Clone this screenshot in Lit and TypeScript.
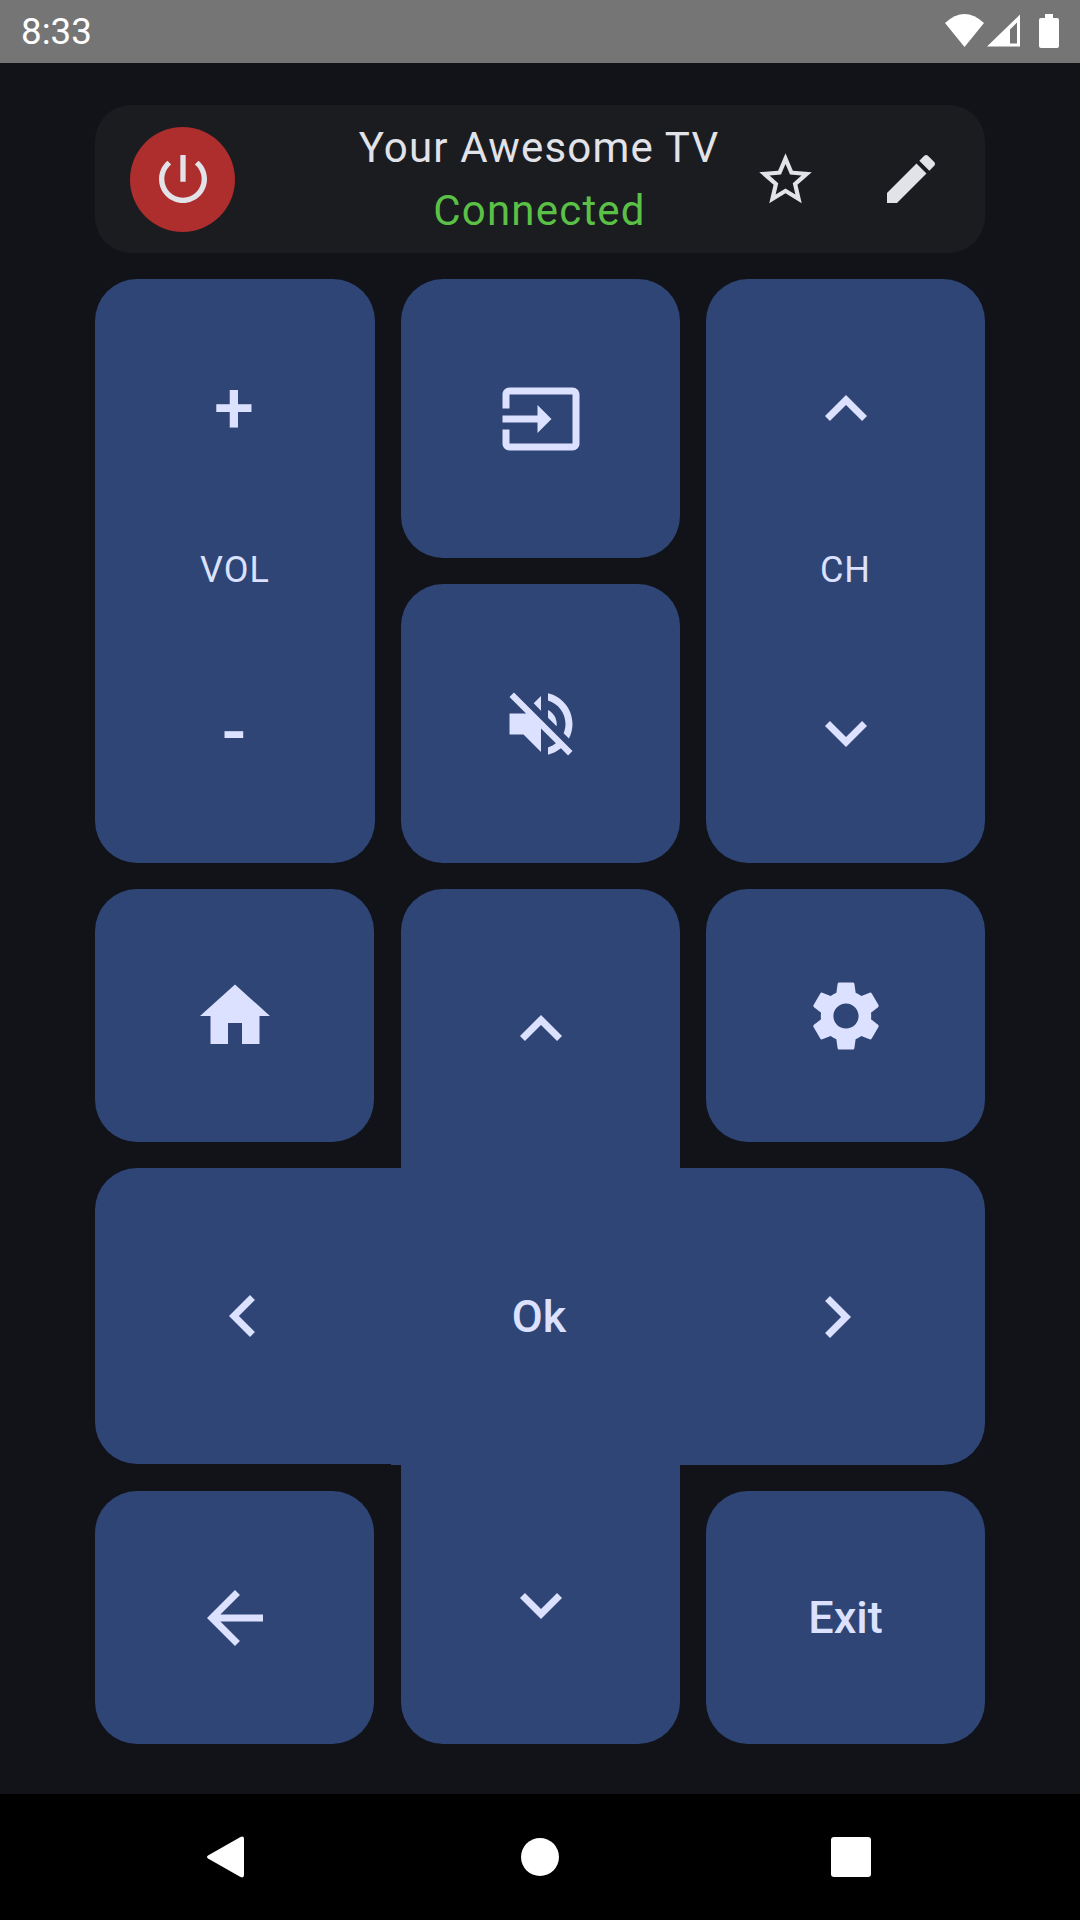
import { LitElement, html, css, svg } from "lit";
import { customElement } from "lit/decorators.js";

const P = {
  power: "M13 3h-2v10h2V3zm4.83 2.17l-1.42 1.42C17.99 7.86 19 9.81 19 12c0 3.87-3.13 7-7 7s-7-3.13-7-7c0-2.19 1.01-4.14 2.58-5.42L6.17 5.17C4.23 6.82 3 9.26 3 12c0 4.97 4.03 9 9 9s9-4.03 9-9c0-2.74-1.23-5.18-3.17-6.83z",
  star: "M22 9.24l-7.19-.62L12 2 9.19 8.63 2 9.24l5.46 4.73L5.82 21 12 17.27 18.18 21l-1.63-7.03L22 9.24zM12 15.4l-3.76 2.27 1-4.28-3.32-2.88 4.38-.38L12 6.1l1.71 4.04 4.38.38-3.32 2.88 1 4.28L12 15.4z",
  edit: "M3 17.25V21h3.75L17.81 9.94l-3.75-3.75L3 17.25zM20.71 7.04c.39-.39.39-1.02 0-1.41l-2.34-2.34c-.39-.39-1.02-.39-1.41 0l-1.83 1.83 3.75 3.75 1.83-1.83z",
  input: "M21 3.01H3c-1.1 0-2 .9-2 2V9h2V4.99h18v14.03H3V15H1v4.01c0 1.1.9 1.98 2 1.98h18c1.1 0 2-.88 2-1.98v-14c0-1.11-.9-2-2-2zM11 16l4-4-4-4v3H1v2h10v3z",
  mute: "M16.5 12c0-1.77-1.02-3.29-2.5-4.03v2.21l2.45 2.45c.03-.2.05-.41.05-.63zm2.5 0c0 .94-.2 1.82-.54 2.64l1.51 1.51C20.63 14.91 21 13.5 21 12c0-4.28-2.99-7.86-7-8.77v2.06c2.89.86 5 3.54 5 6.71zM4.27 3L3 4.27 7.73 9H3v6h4l5 5v-6.73l4.25 4.25c-.67.52-1.42.93-2.25 1.18v2.06c1.38-.31 2.63-.95 3.69-1.81L19.73 21 21 19.73l-9-9L4.27 3zM12 4L9.91 6.09 12 8.18V4z",
  up: "M7.41 15.41L12 10.83l4.59 4.58L18 14l-6-6-6 6z",
  down: "M7.41 8.59L12 13.17l4.59-4.58L18 10l-6 6-6-6 1.41-1.41z",
  left: "M15.41 16.59L10.83 12l4.58-4.59L14 6l-6 6 6 6 1.41-1.41z",
  right: "M8.59 16.59L13.17 12 8.59 7.41 10 6l6 6-6 6-1.41-1.41z",
  home: "M10 20v-6h4v6h5v-8h3L12 3 2 12h3v8z",
  settings: "M19.14 12.94c.04-.3.06-.61.06-.94 0-.32-.02-.64-.07-.94l2.03-1.58c.18-.14.23-.41.12-.61l-1.92-3.32c-.12-.22-.37-.29-.59-.22l-2.39.96c-.5-.38-1.03-.7-1.62-.94l-.36-2.54c-.04-.24-.24-.41-.48-.41h-3.84c-.24 0-.43.17-.47.41l-.36 2.54c-.59.24-1.13.57-1.62.94l-2.39-.96c-.22-.08-.47 0-.59.22L2.74 8.87c-.12.21-.08.47.12.61l2.03 1.58c-.05.3-.09.63-.09.94s.02.64.07.94l-2.03 1.58c-.18.14-.23.41-.12.61l1.92 3.32c.12.22.37.29.59.22l2.39-.96c.5.38 1.03.7 1.62.94l.36 2.54c.05.24.24.41.48.41h3.84c.24 0 .44-.17.47-.41l.36-2.54c.59-.24 1.13-.56 1.62-.94l2.39.96c.22.08.47 0 .59-.22l1.92-3.32c.12-.22.07-.47-.12-.61l-2.01-1.58zM12 15.6c-1.98 0-3.6-1.62-3.6-3.6s1.62-3.6 3.6-3.6 3.6 1.62 3.6 3.6-1.62 3.6-3.6 3.6z",
  back: "M20 11H7.83l5.59-5.59L12 4l-8 8 8 8 1.41-1.41L7.83 13H20v-2z",
};

const icon = (d: string, cls = "i84") =>
  html`<svg class=${cls} viewBox="0 0 24 24">${svg`<path d=${d}></path>`}</svg>`;

@customElement("app-root")
export class AppRoot extends LitElement {
  static styles = css`
    :host {
      display: block;
      width: 1080px;
      height: 1920px;
      font-family: Roboto, "Liberation Sans", sans-serif;
      color: #dbe1ff;
    }
    svg { display: block; fill: currentColor; flex: none; overflow: visible; }
    .i84 { width: 84px; height: 84px; }
    .i64 { width: 64px; height: 64px; }
    .i63 { width: 63px; height: 63px; }
    .page { display: flex; flex-direction: column; height: 1920px; background: #111318; }

    .status {
      height: 63px;
      background: #757575;
      color: #fff;
      display: flex;
      align-items: flex-start;
      padding: 0 21px;
      font-size: 36.75px;
    }
    .clock { flex: 1; line-height: 63px; }
    .sicons { display: flex; align-items: flex-start; padding-top: 14px; }
    .wifi { width: 39px; height: 33px; margin-right: 3px; }
    .signal { width: 33px; height: 33px; margin-right: 19px; }
    .battery { width: 20px; height: 34px; }

    .main { flex: 1; padding: 42px 95px 0; display: flex; flex-direction: column; gap: 26px; }

    .header {
      height: 148px;
      background: #1a1c20;
      border-radius: 36px;
      display: flex;
      align-items: center;
      padding-left: 35px;
      color: #e2e2e9;
    }
    .power {
      width: 105px;
      height: 105px;
      border-radius: 50%;
      background: #ae2d2d;
      display: flex;
      align-items: center;
      justify-content: center;
      flex: none;
    }
    .titles {
      width: 400px;
      margin-left: 104px;
      text-align: center;
      font-size: 42px;
      line-height: 63px;
      letter-spacing: 1.2px;
      flex: none;
    }
    .connected { color: #5bc146; padding-left: 1px; }
    .star { margin-left: 14.5px; }
    .edit { margin-left: 62.5px; }

    .top { display: grid; grid-template-columns: 280px 279px 279px; gap: 26px; }
    .btn {
      background: #2e4576;
      border-radius: 42px;
      display: flex;
      align-items: center;
      justify-content: center;
    }
    .tall {
      grid-row: span 2;
      flex-direction: column;
      justify-content: space-between;
      height: 584px;
      padding: 88px 0;
      box-sizing: border-box;
    }
    .square { height: 279px; }
    .label { font-size: 36px; line-height: 42px; letter-spacing: 1px; margin-bottom: 3px; }
    .sign { height: 84px; line-height: 84px; font-size: 72px; font-weight: 500; padding-right: 2px; }

    .pad {
      display: grid;
      grid-template-columns: 279px 27px 279px 26px 279px;
      grid-template-rows: 253px 26px 297px 26px 253px;
    }
    .pad > .home { grid-column: 1; grid-row: 1; }
    .pad > .up { grid-column: 3; grid-row: 1 / 3; border-radius: 42px 42px 0 0; }
    .pad > .settings { grid-column: 5; grid-row: 1; }
    .pad > .bar { grid-column: 1 / 6; grid-row: 3; display: flex; }
    .pad > .backbtn { grid-column: 1; grid-row: 5; }
    .pad > .down { grid-column: 3; grid-row: 4 / 6; border-radius: 0 0 42px 42px; }
    .pad > .exit { grid-column: 5; grid-row: 5; }
    .side { width: 296px; flex: none; }
    .l { height: 296px; border-radius: 42px 0 0 42px; }
    .r { border-radius: 0 42px 42px 0; }
    .mid { flex: 1; border-radius: 0; padding-right: 2px; }
    .word { font-size: 45px; font-weight: 500; }

    .nav { height: 126px; background: #000; display: flex; align-items: center; padding-left: 207px; color: #fff; }
    .navback { width: 37px; height: 42px; margin-right: 277px; }
    .navhome { width: 38px; height: 38px; border-radius: 50%; background: #fff; margin-right: 272px; }
    .navrecent { width: 40px; height: 40px; border-radius: 3px; background: #fff; }
  `;

  render() {
    return html`
      <div class="page">
        <div class="status">
          <div class="clock">8:33</div>
          <div class="sicons">
            <svg class="wifi" viewBox="0 0 39 33"><path d="M0 9Q19.5 -9 39 9L19.5 33Z"></path></svg>
            <svg class="signal" viewBox="0 0 33 32">
              <path fill-rule="evenodd" d="M0 32L33 0V32ZM30 8L23 15V29H30Z"></path>
            </svg>
            <svg class="battery" viewBox="0 0 20 34">
              <path d="M6 0H14V4H18Q20 4 20 6V32Q20 34 18 34H2Q0 34 0 32V6Q0 4 2 4H6Z"></path>
            </svg>
          </div>
        </div>

        <div class="main">
          <div class="header">
            <div class="power">${icon(P.power, "i64")}</div>
            <div class="titles">
              <div>Your Awesome TV</div>
              <div class="connected">Connected</div>
            </div>
            <div class="star">${icon(P.star, "i63")}</div>
            <div class="edit">${icon(P.edit, "i64")}</div>
          </div>

          <div class="top">
            <div class="btn tall">
              <div class="sign">+</div>
              <div class="label">VOL</div>
              <div class="sign">-</div>
            </div>
            <div class="btn square">${icon(P.input)}</div>
            <div class="btn tall">
              ${icon(P.up)}
              <div class="label">CH</div>
              ${icon(P.down)}
            </div>
            <div class="btn square">${icon(P.mute)}</div>
          </div>

          <div class="pad">
            <div class="btn home">${icon(P.home)}</div>
            <div class="btn up">${icon(P.up)}</div>
            <div class="btn settings">${icon(P.settings)}</div>
            <div class="bar">
              <div class="btn side l">${icon(P.left)}</div>
              <div class="btn mid word">Ok</div>
              <div class="btn side r">${icon(P.right)}</div>
            </div>
            <div class="btn backbtn">${icon(P.back)}</div>
            <div class="btn down">${icon(P.down)}</div>
            <div class="btn exit word">Exit</div>
          </div>
        </div>

        <div class="nav">
          <svg class="navback" viewBox="0 0 37 42">
            <path d="M1 19.5L33.5 1Q37 -0.5 37 3V39Q37 42.5 33.5 41L1 22.5Q-1 21 1 19.5Z"></path>
          </svg>
          <div class="navhome"></div>
          <div class="navrecent"></div>
        </div>
      </div>
    `;
  }
}
